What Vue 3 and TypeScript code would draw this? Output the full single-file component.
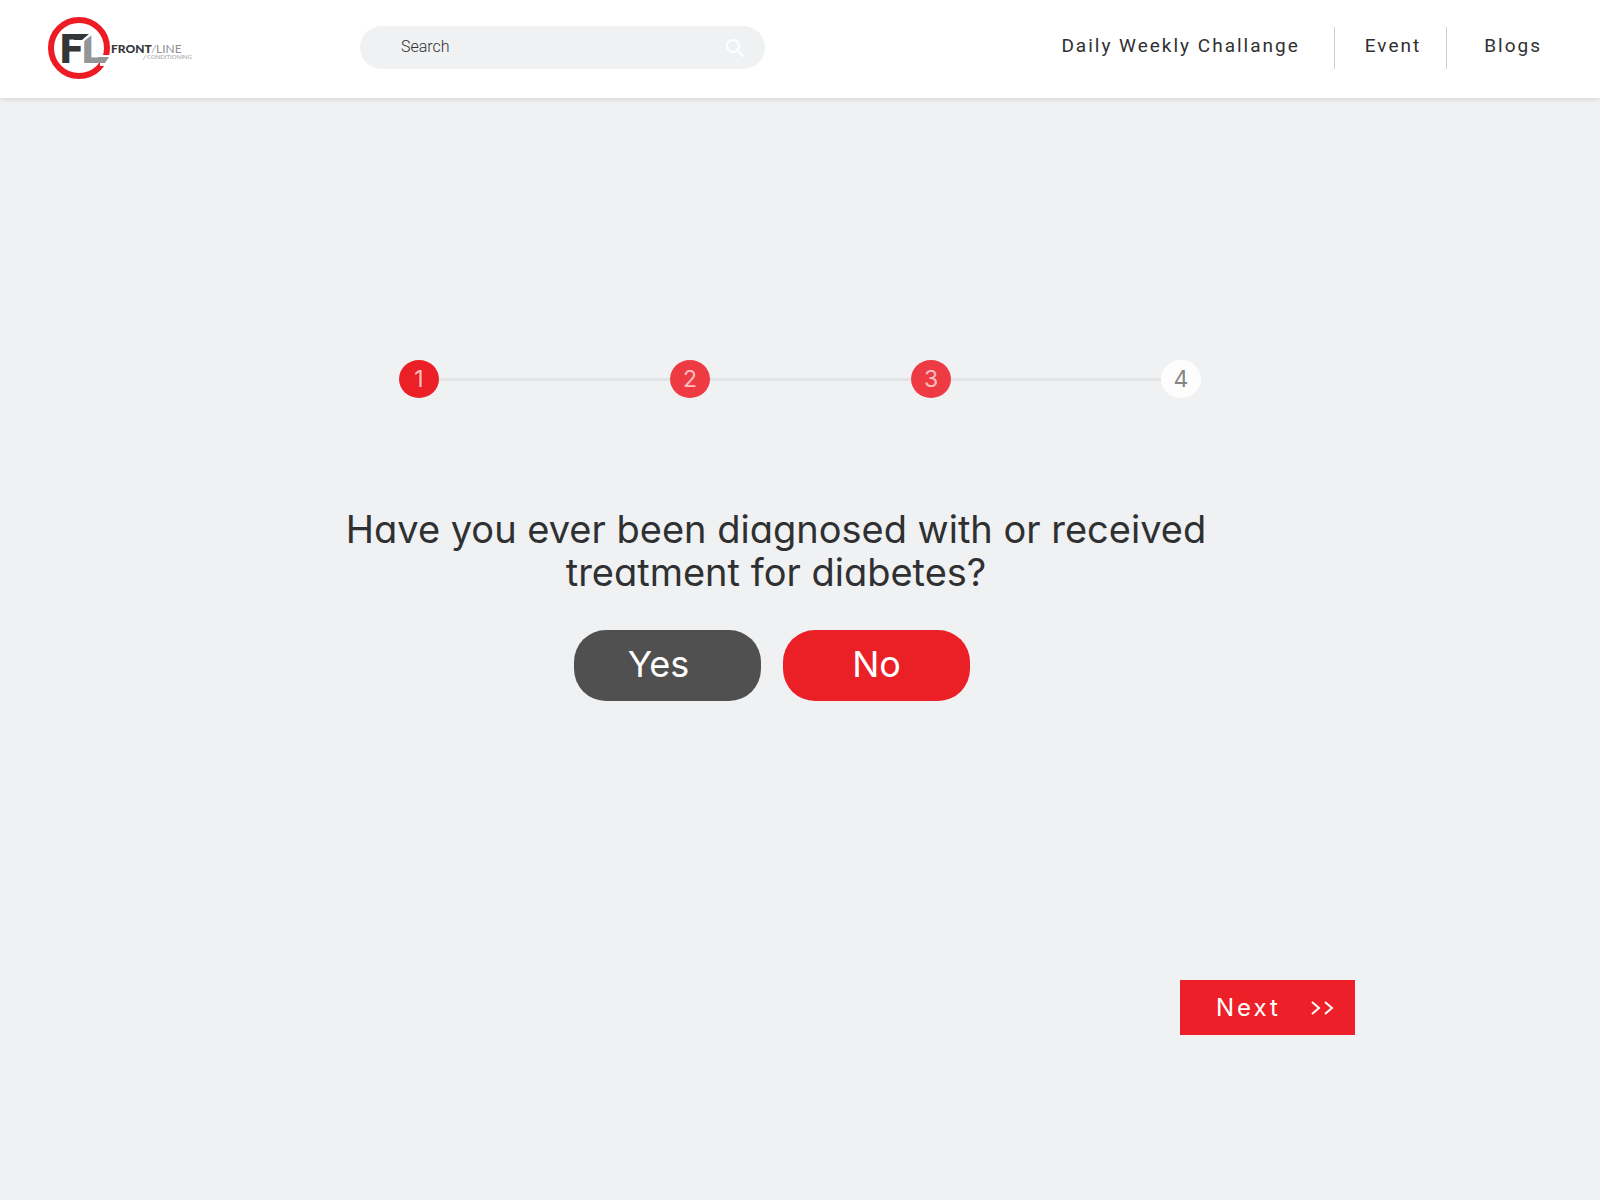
<script setup lang="ts">
import { ref } from 'vue'

interface Step {
  label: number
  state: 'current' | 'open' | 'last'
  // relative length of the track that follows the step
  track: number
}

const links: string[] = ['Daily Weekly Challange', 'Event', 'Blogs']

const steps: Step[] = [
  { label: 1, state: 'current', track: 231 },
  { label: 2, state: 'open', track: 201 },
  { label: 3, state: 'open', track: 210 },
  { label: 4, state: 'last', track: 0 },
]

const query = ref('')
</script>

<template>
  <div class="page">
    <header class="topbar">
      <a href="#" class="logo" aria-label="Front Line Conditioning">
        <svg width="146" height="66" viewBox="0 0 146 66">
          <circle cx="31" cy="33" r="28" fill="none" stroke="#ed1c24" stroke-width="6" />
          <polygon points="52,40 64,40 60,51 52,51" fill="#fff" />
          <text x="12" y="48" class="mono dark">F</text>
          <text x="34" y="48" class="mono grey">L</text>
          <polygon points="34,15 45,15 45,19 35,27 34,27" fill="#fff" />
          <polygon points="26,19 41,19 34,25 26,25" fill="#343537" />
          <polygon points="50,42 61,42 57,48 50,48" fill="#939598" />
          <text x="63" y="38" class="word dark">FRONT</text>
          <line x1="104" y1="38" x2="108" y2="30" stroke="#b5b6b8" />
          <text x="108" y="38" class="word light">LINE</text>
          <line x1="95" y1="45" x2="98" y2="40" stroke="#c6c7c9" />
          <text x="99" y="44" class="sub">CONDITIONING</text>
        </svg>
      </a>

      <form class="search" role="search" @submit.prevent>
        <input v-model="query" type="text" placeholder="Search" aria-label="Search" />
        <button type="submit" aria-label="Submit search">
          <svg width="20" height="20" viewBox="0 0 20 20" fill="none" stroke="#fff" stroke-width="2">
            <circle cx="8" cy="8" r="6" />
            <path d="M12.500 12.500 L18 18" stroke-linecap="round" />
          </svg>
        </button>
      </form>

      <nav class="nav">
        <a v-for="link in links" :key="link" href="#">{{ link }}</a>
      </nav>
    </header>

    <main class="content">
      <ol class="steps">
        <template v-for="step in steps" :key="step.label">
          <li class="dot" :class="step.state">{{ step.label }}</li>
          <li v-if="step.track" class="track" :style="{ flexGrow: step.track }" aria-hidden="true"></li>
        </template>
      </ol>

      <section class="question">
        <h1>Have you ever been diagnosed with or received treatment for diabetes?</h1>
        <div class="answers">
          <button type="button" class="answer yes">Yes</button>
          <button type="button" class="answer no">No</button>
        </div>
      </section>

      <div class="actions">
        <button type="button" class="next">
          Next
          <svg width="24" height="14" viewBox="0 0 24 14" fill="none" stroke="#fff" stroke-width="2" aria-hidden="true">
            <path d="M1 1 L8 7 L1 13 M14 1 L21 7 L14 13" />
          </svg>
        </button>
      </div>
    </main>
  </div>
</template>

<style>
body {
  background: #eff1f3;
}
</style>

<style scoped>
.page {
  min-height: 100vh;
  font-family: Inter, "Open Sans", sans-serif;
  font-feature-settings: "cv11";
  color: #2f3032;
}

button {
  border: 0;
  padding: 0;
  font: inherit;
  font-feature-settings: inherit;
  color: #fff;
  cursor: pointer;
}

.topbar {
  display: flex;
  align-items: center;
  box-sizing: border-box;
  height: 98px;
  padding: 0 58px 3px 48px;
  background: #fff;
  box-shadow: 0 1px 5px rgba(0, 0, 0, 0.14);
}

.logo svg {
  display: block;
}

.mono {
  font-family: Roboto, sans-serif;
  font-size: 41px;
  font-weight: 900;
}

.word {
  font-family: Lato, sans-serif;
  font-size: 12px;
  font-weight: 900;
}

.dark {
  fill: #343537;
}

.grey {
  fill: #939598;
}

.light {
  fill: #8e9093;
  font-weight: 400;
}

.sub {
  font-family: Lato, sans-serif;
  font-size: 6px;
  fill: #9d9fa2;
}

.search {
  display: flex;
  align-items: center;
  box-sizing: border-box;
  width: 405px;
  height: 43px;
  margin-left: 166px;
  padding: 0 20px 0 41px;
  border-radius: 22px;
  background: #eff1f3;
}

.search input {
  flex: 1;
  min-width: 0;
  padding: 0 0 2px;
  border: 0;
  outline: 0;
  background: none;
  font: 300 16px/20px Roboto, sans-serif;
  color: #2f3032;
}

.search input::placeholder {
  color: #2f3032;
  opacity: 1;
}

.search button {
  background: none;
}

.search svg {
  display: block;
}

.nav {
  display: flex;
  margin-left: auto;
  font: 400 19px/38px Roboto, sans-serif;
  letter-spacing: 2px;
}

.nav a {
  padding: 0 25px 4px 30px;
  border-left: 1px solid #cfcfcf;
  color: #2f3032;
  text-decoration: none;
}

.nav a:first-child {
  padding-right: 34px;
  border-left: 0;
}

.nav a:last-child {
  padding-left: 37px;
  padding-right: 0;
}

.content {
  padding-top: 262px;
}

.steps {
  display: flex;
  align-items: center;
  max-width: 802px;
  margin: 0 auto;
  padding: 0;
  list-style: none;
}

.dot {
  width: 40px;
  border-radius: 50%;
  background: #ee3b43;
  color: #f9c0c3;
  font-size: 23px;
  line-height: 38px;
  text-align: center;
}

.dot.current {
  background: #eb2027;
}

.dot.last {
  background: #fdfdfd;
  color: #858585;
}

.track {
  height: 3px;
  background: #e1e3e5;
}

.question {
  padding: 110px 48px 0 0;
}

.question h1 {
  max-width: 900px;
  margin: 0 auto;
  font-size: 38px;
  font-weight: 400;
  line-height: 43px;
  text-align: center;
}

.answers {
  display: flex;
  justify-content: center;
  gap: 22px;
  margin-top: 36px;
  padding-right: 8px;
}

.answer {
  width: 187px;
  height: 71px;
  padding-bottom: 3px;
  border-radius: 32px;
  font-size: 36px;
}

.yes {
  padding-right: 18px;
  background: #505050;
}

.no {
  background: #eb2027;
}

.actions {
  display: flex;
  justify-content: flex-end;
  padding: 279px 245px 60px 0;
}

.next {
  display: flex;
  align-items: center;
  justify-content: space-between;
  width: 175px;
  height: 55px;
  padding: 0 20px 0 36px;
  background: #ed2029;
  font-size: 24px;
  letter-spacing: 3px;
}
</style>
